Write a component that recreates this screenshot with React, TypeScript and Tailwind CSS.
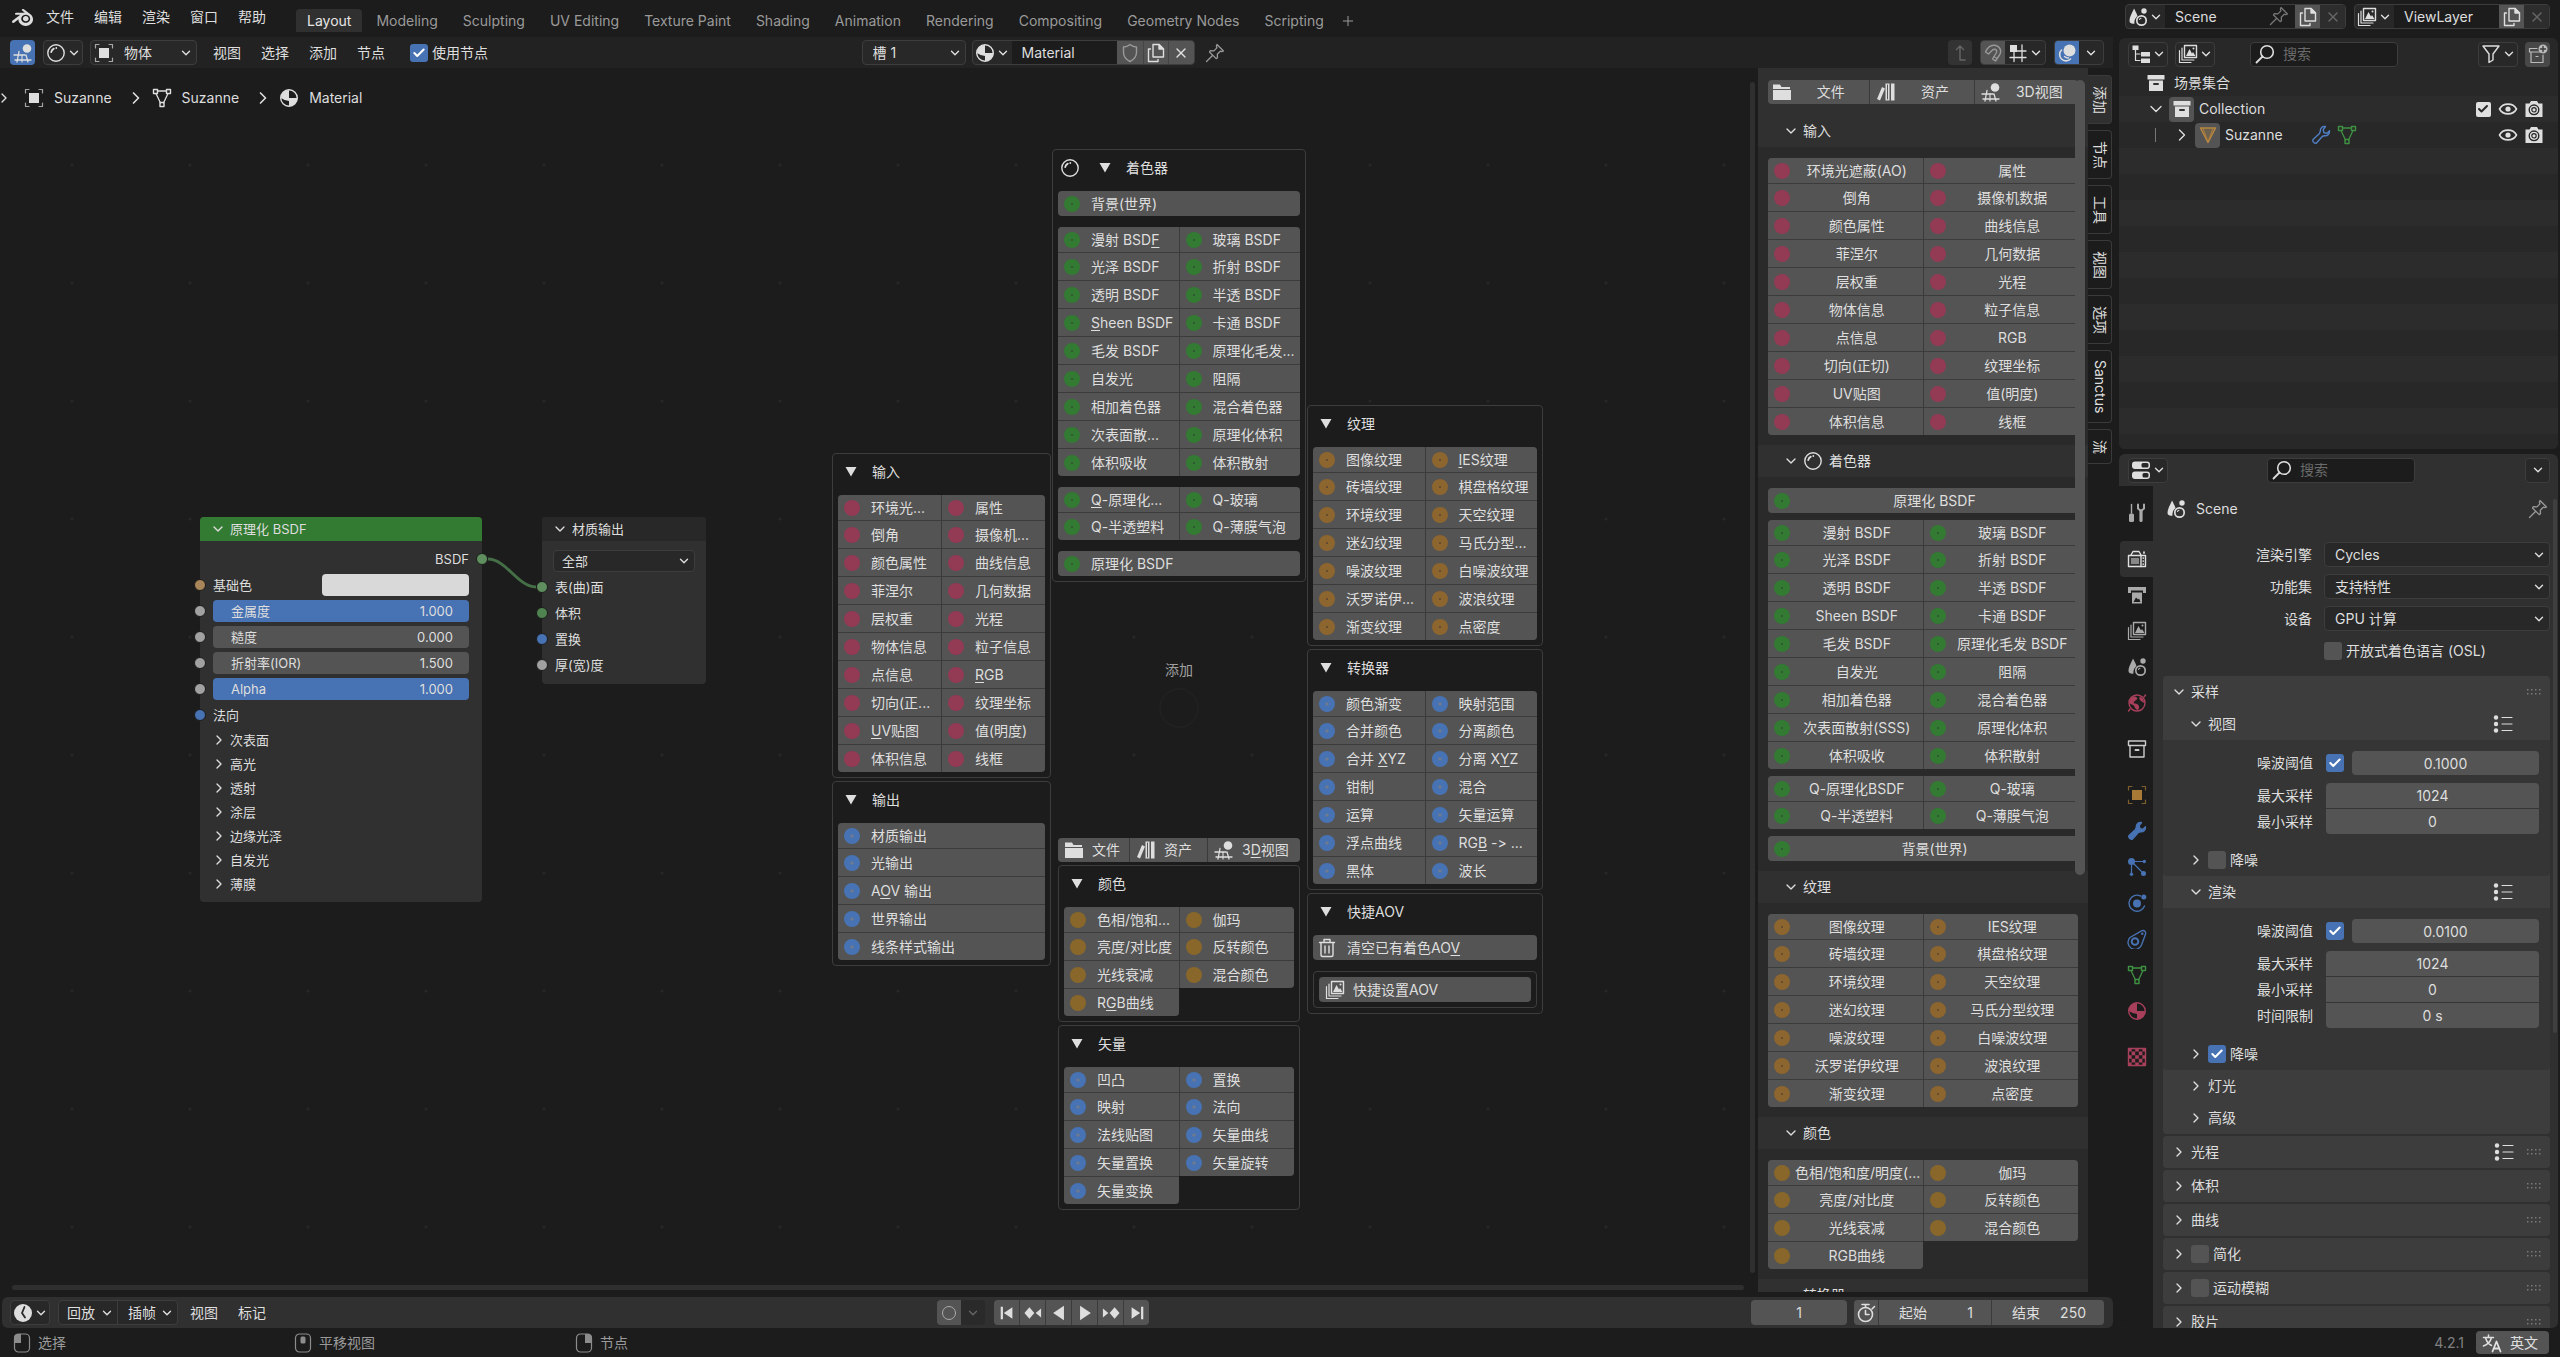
import React, { useId } from 'react';
import { SiBlender } from 'react-icons/si';
import { ChevronDown, ChevronRight, X, Plus, Check } from 'lucide-react';

/* ---------- icons ---------- */

type IconProps = { className?: string };

function Svg({ className = '', children }: IconProps & { children: React.ReactNode }) {
  return (
    <svg
      viewBox="0 0 20 20"
      className={`size-5 shrink-0 ${className}`}
      fill="none"
      stroke="currentColor"
      strokeWidth="1.4"
      strokeLinejoin="round"
      strokeLinecap="round"
      aria-hidden="true"
    >
      {children}
    </svg>
  );
}

const NodeGridIcon = (p: IconProps) => (
  <Svg {...p}>
    <path d="M1 12h11M2 17h16M6 8.5L4 19M13 12l2 7" strokeWidth="1.3" />
    <path d="M9 12V19" strokeWidth="1.1" />
    <circle cx="14" cy="5.5" r="4.3" fill="currentColor" stroke="none" />
  </Svg>
);

const SphereIcon = (p: IconProps) => (
  <Svg {...p}>
    <circle cx="10" cy="10" r="8.2" />
    <path d="M5.2 9.2a5 5 0 0 1 2.6-3.6" strokeWidth="1.8" />
    <path d="M10.3 5v.1" strokeWidth="1.8" />
  </Svg>
);

const ObjectIcon = (p: IconProps) => (
  <Svg {...p}>
    <rect x="5" y="5" width="10" height="10" fill="currentColor" stroke="none" />
    <path d="M1.5 5V1.5H5M15 1.5h3.5V5M18.500 15v3.500H15M5 18.500H1.500V15" opacity="0.7" strokeWidth="1.2" />
  </Svg>
);

const MeshIcon = (p: IconProps) => (
  <Svg {...p}>
    <path d="M5.500 3h9M4 5.500l4.500 9.500M16 5.500L11.500 15" strokeWidth="1.3" />
    <rect x="1.500" y="1.500" width="4" height="4" />
    <rect x="14.500" y="1.500" width="4" height="4" />
    <rect x="8" y="14.500" width="4" height="4" />
  </Svg>
);

const TriangleMeshIcon = (p: IconProps) => (
  <Svg {...p}>
    <path d="M2.500 3h15L10 17.500z" strokeWidth="1.6" fill="currentColor" fillOpacity="0.25" />
    <path d="M5 3l5 14L15 3" strokeWidth="0.8" />
  </Svg>
);

const MaterialIcon = (p: IconProps) => (
  <Svg {...p}>
    <circle cx="10" cy="10" r="8.300" />
    <path d="M10 10v8.300A8.300 8.300 0 0 0 18.300 10z" fill="currentColor" stroke="none" />
    <path d="M10 2a8 8 0 0 0-8 8q4 3 8 3z" fill="currentColor" stroke="none" />
  </Svg>
);

const ShieldIcon = (p: IconProps) => (
  <Svg {...p}>
    <path d="M10 1.500c2 1.800 4 2.500 6.500 2.500v5.500c0 4-2.500 7-6.500 9-4-2-6.500-5-6.500-9V4c2.500 0 4.500-.7 6.500-2.500z" />
  </Svg>
);

const CopyIcon = (p: IconProps) => (
  <Svg {...p}>
    <path d="M7 1.500h6l4.500 4.500v8H7z" />
    <path d="M13 1.500V6h4.500z" fill="currentColor" />
    <path d="M4.500 6H2.500v12.500H12V16.500" />
  </Svg>
);

const PinIcon = (p: IconProps) => (
  <Svg {...p}>
    <path d="M12 1.500L18.500 8l-1.600.6-1.600-.4-3 3 .2 3.600-1.300.8L4.500 9l.8-1.300 3.600.2 3-3-.5-1.700zM7.500 12.500L1.500 18.500" strokeWidth="1.300" />
  </Svg>
);

const UpIcon = (p: IconProps) => (
  <Svg {...p}>
    <path d="M6.500 6.500L10 3l3.500 3.500M10 3v14h5" />
  </Svg>
);

const MagnetIcon = (p: IconProps) => (
  <Svg {...p}>
    <path d="M2.500 9C5 3.500 9 1.500 13 2.500S19 8 16.500 12L12.500 18 9.500 16l4-6.500C14 8 13.500 7 12.500 6.500S10 6.500 9 7.500L5.500 11z" />
    <path d="M10.800 13.500l3.200 2" strokeWidth="1.100" />
  </Svg>
);

const SnapGridIcon = (p: IconProps) => (
  <Svg {...p}>
    <path d="M8 8H18M2 14.500h16M6 8v10.500M14 2v16.500" strokeWidth="1.300" />
    <rect x="2" y="2" width="7" height="7" fill="currentColor" stroke="none" />
  </Svg>
);

const OverlayIcon = (p: IconProps) => (
  <Svg {...p}>
    <circle cx="12.500" cy="7.500" r="6" fill="currentColor" stroke="none" />
    <path d="M4.500 7a6 6 0 1 0 9 9" strokeWidth="1.600" />
    <path d="M7.500 13.500q1.500 1.500 4 1.500" />
  </Svg>
);

const SceneIcon = (p: IconProps) => (
  <Svg {...p}>
    <path d="M6 1.500c-1 3-4.500 8-4.500 12.500 0 2.500 3 3 5 2.500C6 12 9 9.500 9.500 9 8.500 6 7 3.500 6 1.500z" fill="currentColor" stroke="none" />
    <circle cx="13.500" cy="13.500" r="4.700" strokeWidth="1.700" />
    <path d="M11.500 12.500q.5-1 1.500-1.300" strokeWidth="1.100" />
    <circle cx="16" cy="4" r="2.700" fill="currentColor" stroke="none" />
  </Svg>
);

const LayersIcon = (p: IconProps) => (
  <Svg {...p}>
    <rect x="6.500" y="1.500" width="12" height="12" />
    <path d="M8 12l3.500-7 2.500 4.500 1-1.500 2.500 4z" fill="currentColor" stroke="none" />
    <circle cx="15.500" cy="4.500" r="1" fill="currentColor" stroke="none" />
    <path d="M4 4v12h12M1.500 6.500v12H13" strokeWidth="1.200" />
  </Svg>
);

const OutlinerIcon = (p: IconProps) => (
  <Svg {...p}>
    <rect x="1.500" y="1.500" width="6" height="4.500" fill="currentColor" stroke="none" />
    <path d="M4.500 6v10.500H9M4.500 10H9" strokeWidth="1.200" />
    <rect x="10" y="8" width="9" height="4.500" fill="currentColor" stroke="none" />
    <rect x="10" y="14.500" width="9" height="4.500" fill="currentColor" stroke="none" />
  </Svg>
);

const SearchIcon = (p: IconProps) => (
  <Svg {...p}>
    <circle cx="12" cy="8" r="6.300" strokeWidth="1.600" />
    <path d="M7.500 12.500L1.500 18.500" strokeWidth="1.800" />
  </Svg>
);

const FilterIcon = (p: IconProps) => (
  <Svg {...p}>
    <path d="M2 2h16l-6 8v6l-4 2.500V10z" />
  </Svg>
);

const ArchiveIcon = (p: IconProps) => (
  <Svg {...p}>
    <path d="M1.500 2h17v4.500h-17zM3 7.500h14V18H3z" fill="currentColor" stroke="none" />
    <path d="M8 11h4" stroke="#303030" strokeWidth="2" />
  </Svg>
);

const ArchiveLineIcon = (p: IconProps) => (
  <Svg {...p}>
    <path d="M1.500 2h17v4.500h-17zM3 6.500h14V18H3z" />
    <path d="M8.500 11h3" strokeWidth="2" />
  </Svg>
);

const NewCollectionIcon = (p: IconProps) => (
  <Svg {...p}>
    <path d="M9 4.500H1.500V8H14M3 8v10.500h12V11M8 12.500h2" strokeWidth="1.200" />
    <circle cx="15" cy="5" r="4.500" fill="currentColor" stroke="none" />
    <path d="M15 2.500v5M12.500 5h5" stroke="#3c3c3c" />
  </Svg>
);

const WrenchIcon = ({ className, solid }: IconProps & { solid?: boolean }) => (
  <Svg className={className}>
    <path
      d="M14.500 1.500c-3-.5-5.500 1.500-5.200 4.800L8.500 8.500 2 14.500c-1 1.300.8 4.500 3.500 3.500l6-6.700 2.200-.6c3 .2 5.200-2 4.800-5l-2.500 2.500-3-.5-.8-3z"
      fill={solid ? 'currentColor' : 'none'}
    />
  </Svg>
);

const EyeIcon = (p: IconProps) => (
  <Svg {...p}>
    <path d="M1.500 10C5 3.500 15 3.500 18.500 10 15 16.500 5 16.500 1.500 10z" strokeWidth="1.600" />
    <circle cx="10" cy="10" r="2.600" fill="currentColor" stroke="none" />
  </Svg>
);

const CameraIcon = (p: IconProps) => (
  <Svg {...p}>
    <path d="M1.500 4.500h4L7 2h6l1.500 2.500h4V18h-17z" fill="currentColor" stroke="none" />
    <circle cx="10" cy="10.800" r="4.800" stroke="#282828" strokeWidth="1.400" />
    <circle cx="10" cy="10.800" r="2.200" stroke="#282828" strokeWidth="1.200" />
  </Svg>
);

const PropsIcon = (p: IconProps) => (
  <Svg {...p}>
    <rect x="1" y="1.500" width="18" height="7.500" rx="3" fill="currentColor" stroke="none" />
    <rect x="10.500" y="3" width="7" height="4.500" rx="1.500" fill="#282828" stroke="none" />
    <rect x="1" y="11.500" width="18" height="7.500" rx="3" fill="currentColor" stroke="none" />
    <rect x="11.500" y="13" width="6" height="4.500" rx="1.500" fill="#282828" stroke="none" />
  </Svg>
);

const ToolIcon = (p: IconProps) => (
  <Svg {...p}>
    <path d="M4.500 1.500V10" />
    <rect x="2" y="10.500" width="5" height="8.500" rx="1.500" fill="currentColor" stroke="none" />
    <path d="M11 1.500v4l3 2.500 3-2.500v-4" strokeWidth="2" />
    <path d="M14 8v9.500" strokeWidth="3.200" />
  </Svg>
);

const RenderIcon = (p: IconProps) => (
  <Svg {...p}>
    <path d="M4 6l2-3.500h6L14 6M1.500 6.500h17v11h-17z" />
    <path d="M14 7v10.500" />
    <rect x="4" y="9" width="8" height="6" fill="currentColor" stroke="none" opacity="0.5" />
    <path d="M16.200 9v.1M16.200 12v.1M16.200 15v.1M17 3v1" strokeWidth="1.700" />
  </Svg>
);

const OutputIcon = (p: IconProps) => (
  <Svg {...p}>
    <path d="M1 2h18v6h-3V5.500H4V8H1z" fill="currentColor" stroke="none" />
    <rect x="5" y="7.500" width="10" height="11" fill="currentColor" stroke="none" />
    <path d="M6.500 17L9 12.500l2 2 1-1 1.500 3.500z" fill="#1c1c1c" stroke="none" />
  </Svg>
);

const WorldIcon = (p: IconProps) => (
  <Svg {...p}>
    <circle cx="10" cy="10" r="8" />
    <path d="M4 5c3-2 5-2 6 0s-2 2-3 4 1 1 3 2 3 3 1 6c-3 0-3-4-5-5s-3-1-4-3zM13 4c2 0 4 3 4 5s-3-1-4-2-1-3 0-3z" fill="currentColor" stroke="none" />
    <path d="M17 4l1.500-2M3 16l-1.500 2" />
  </Svg>
);

const ParticlesIcon = (p: IconProps) => (
  <Svg {...p}>
    <circle cx="4.500" cy="4.500" r="3.500" fill="currentColor" stroke="none" />
    <path d="M8 4.500h8M4.500 8v8M7 7l9.500 9.500" strokeWidth="1.200" />
    <circle cx="17.300" cy="4.500" r="1.700" fill="currentColor" stroke="none" />
    <circle cx="4.500" cy="17.300" r="1.700" fill="currentColor" stroke="none" />
    <circle cx="16.500" cy="16.500" r="2.500" fill="currentColor" stroke="none" />
  </Svg>
);

const PhysicsIcon = (p: IconProps) => (
  <Svg {...p}>
    <path d="M13.500 3A8 8 0 1 0 17.500 13" />
    <circle cx="10" cy="10.500" r="4" fill="currentColor" stroke="none" />
    <circle cx="16.800" cy="4" r="2.500" fill="currentColor" stroke="none" />
  </Svg>
);

const ConstraintIcon = (p: IconProps) => (
  <Svg {...p}>
    <path d="M3 8.500L14.500 1.800c3-1 4.800 1 3.900 3.800L14.500 16a7 7 0 1 1-11.500-7.500z" />
    <circle cx="8" cy="12.500" r="3.300" strokeWidth="2" />
    <circle cx="15.300" cy="4.800" r="1.200" fill="currentColor" stroke="none" />
  </Svg>
);

const TextureIcon = (p: IconProps) => (
  <Svg {...p}>
    <rect x="1.500" y="1.500" width="17" height="17" />
    <path
      d="M1 1h3.600v3.600H1zM8.200 1h3.600v3.600H8.200zM15.400 1H19v3.600h-3.600zM4.600 4.600h3.600v3.600H4.600zM11.800 4.600h3.600v3.600h-3.600zM1 8.200h3.600v3.600H1zM8.200 8.200h3.600v3.600H8.200zM15.400 8.200H19v3.600h-3.600zM4.600 11.800h3.600v3.600H4.600zM11.800 11.800h3.600v3.600h-3.600zM1 15.400h3.600V19H1zM8.200 15.400h3.600V19H8.200zM15.400 15.400H19V19h-3.600z"
      fill="currentColor"
      stroke="none"
    />
  </Svg>
);

const ListIcon = (p: IconProps) => (
  <Svg {...p}>
    <path d="M9 3.500h10M9 10h10M9 16.500h10" strokeWidth="1.200" />
    <circle cx="3" cy="3.500" r="2.200" fill="currentColor" stroke="none" />
    <circle cx="3" cy="10" r="2.200" fill="currentColor" stroke="none" />
    <circle cx="3" cy="16.500" r="2.200" fill="currentColor" stroke="none" />
  </Svg>
);

const GripIcon = () => (
  <svg viewBox="0 0 16 6" className="h-1.5 w-4 shrink-0 text-[#7a7a7a]" fill="currentColor" aria-hidden="true">
    {[0, 4, 8, 12].map((x) => (
      <React.Fragment key={x}>
        <rect x={x + 1} y="0" width="1.500" height="1.500" />
        <rect x={x + 1} y="4" width="1.500" height="1.500" />
      </React.Fragment>
    ))}
  </svg>
);

const ClockIcon = (p: IconProps) => (
  <Svg {...p}>
    <circle cx="10" cy="10" r="9" fill="currentColor" stroke="none" />
    <path d="M11.500 4L9 10l3 4.500" stroke="#282828" strokeWidth="1.800" />
  </Svg>
);

const StopwatchIcon = (p: IconProps) => (
  <Svg {...p}>
    <circle cx="9.500" cy="11.500" r="7" strokeWidth="1.600" />
    <path d="M6 1.500h7M9.500 1.500v3M9.500 7.500v4h3.500M16 6l2.500-2.500" strokeWidth="1.600" />
  </Svg>
);

const FolderIcon = (p: IconProps) => (
  <Svg {...p}>
    <path d="M1 2.500h7l1.500 2.500H18v2H1zM1 8h18v10H1z" fill="currentColor" stroke="none" />
  </Svg>
);

const BooksIcon = (p: IconProps) => (
  <Svg {...p}>
    <path d="M6 5l3 1.500-5 12-3-1.500zM9.500 1.500h4v17h-4zM15 1.500h3.500v17H15z" fill="currentColor" stroke="none" />
    <path d="M11.500 3v14" stroke="#545454" strokeWidth="1" />
  </Svg>
);

const TrashIcon = (p: IconProps) => (
  <Svg {...p}>
    <path d="M2.500 4.500h15M7 4.500v-3h6v3M4 4.500V17c0 1 .5 1.500 1.500 1.500h9c1 0 1.500-.5 1.500-1.500V4.500M8 8v7M12 8v7" />
  </Svg>
);

const TranslateIcon = (p: IconProps) => (
  <Svg {...p}>
    <path d="M1.500 4.500h10M6.500 2v2.500M3.500 4.500c1 4 3 6.500 6 8M9.500 4.500c-1 4-3.500 7-8 8.500" strokeWidth="1.500" />
    <path d="M10.500 18.500l4-10 4 10M12 15.500h5" strokeWidth="1.800" />
  </Svg>
);

function MouseIcon({ press }: { press: 'left' | 'middle' | 'right' }) {
  return (
    <Svg className="text-[#8c8c8c]">
      <rect x="2.500" y="1" width="15" height="18" rx="4" strokeWidth="1.200" />
      {press === 'left' && <path d="M2 10V5q0-4 4-4h3v9z" fill="currentColor" stroke="none" />}
      {press === 'middle' && <rect x="7.500" y="3.500" width="5" height="7" rx="1.500" fill="currentColor" stroke="none" />}
      {press === 'right' && <path d="M18 10V5q0-4-4-4h-3v9z" fill="currentColor" stroke="none" />}
    </Svg>
  );
}

const TRANSPORT = [
  { label: '跳转到起点', d: 'M3 3h2.500v14H3zM16 3.500v13L6.500 10z' },
  { label: '上一关键帧', d: 'M6 3.500l5.500 6.500L6 16.500.5 10zM19 5v10l-6-5z' },
  { label: '反向播放', d: 'M15.500 2v16L3.500 10z' },
  { label: '播放', d: 'M4.500 2v16l12-8z' },
  { label: '下一关键帧', d: 'M14 3.500l5.500 6.500-5.500 6.500L8.500 10zM1 5v10l6-5z' },
  { label: '跳转到终点', d: 'M17 3h-2.500v14H17zM4 3.500v13L13.500 10z' },
];

/* ---------- shared controls ---------- */

function Caret({ className = '' }: IconProps) {
  return <ChevronDown className={`size-3.5 shrink-0 ${className}`} strokeWidth={2.4} aria-hidden="true" />;
}

/** Icon with a small arrow that opens a menu */
function MenuButton({ label, className = '', children }: { label: string; className?: string; children?: React.ReactNode }) {
  return (
    <button
      aria-label={label}
      aria-haspopup="menu"
      className={`flex h-[25px] w-10 shrink-0 items-center justify-center gap-px rounded border border-[#3d3d3d] bg-[#282828] ${className}`}
    >
      {children}
      <Caret />
    </button>
  );
}

function Select({ label, value, className = '', pad = 'pl-2.5' }: { label: string; value: string; className?: string; pad?: string }) {
  return (
    <div className={`relative flex items-center ${className}`}>
      <select aria-label={label} className={`size-full appearance-none rounded border border-[#3d3d3d] bg-[#282828] ${pad} outline-none`}>
        <option>{value}</option>
      </select>
      <Caret className="pointer-events-none absolute right-1" />
    </div>
  );
}

function Checkbox({ id, checked, label }: { id?: string; checked?: boolean; label?: string }) {
  return (
    <span className="relative flex size-[18px] shrink-0 items-center justify-center">
      <input
        id={id}
        aria-label={label}
        type="checkbox"
        defaultChecked={checked}
        className="peer size-[18px] appearance-none rounded-[3px] bg-[#545454] checked:bg-[#4772b3]"
      />
      <Check className="pointer-events-none absolute hidden size-3.5 text-white peer-checked:block" strokeWidth={3.5} aria-hidden="true" />
    </span>
  );
}

function SearchBox({ className }: { className: string }) {
  return (
    <label className={`flex h-[25px] items-center gap-2 rounded border border-[#3d3d3d] bg-[#1c1c1c] px-1 ${className}`}>
      <SearchIcon />
      <input type="search" placeholder="搜索" aria-label="搜索" className="min-w-0 flex-1 bg-transparent outline-none placeholder:text-[#6a6a6a]" />
    </label>
  );
}

/** Data block picker: icon menu, name, then action buttons */
function DataBlock({ icon, label, value, inputClass, children }: { icon: React.ReactNode; label: string; value: string; inputClass: string; children: React.ReactNode }) {
  return (
    <div className="flex h-[25px] shrink-0 overflow-hidden rounded border border-[#3d3d3d] bg-[#282828]">
      <button aria-label={`浏览${label}`} className="flex w-[39px] items-center justify-center gap-px">
        {icon}
        <Caret />
      </button>
      <input aria-label={label} defaultValue={value} className={`bg-[#1c1c1c] pl-2.5 outline-none ${inputClass}`} />
      {children}
    </div>
  );
}

/* ---------- node add buttons ---------- */

const SOCKETS = {
  pink: 'text-[#933a55]',
  green: 'text-[#337a33]',
  orange: 'text-[#8d652e]',
  yellow: 'text-[#89672a]',
  blue: 'text-[#4772b3]',
};

type SocketColor = keyof typeof SOCKETS;

function SocketIcon({ color }: { color: SocketColor }) {
  return (
    <svg viewBox="0 0 18 18" className={`size-[18px] shrink-0 ${SOCKETS[color]}`} aria-hidden="true">
      <circle cx="9" cy="9" r="8" fill="currentColor" />
      {color === 'blue' && <circle cx="9" cy="9" r="1.800" fill="#6d7b92" />}
      {(color === 'green' || color === 'orange') && <circle cx="9" cy="9" r="0.800" fill="#333" />}
    </svg>
  );
}

/** An underscore marks the shortcut letter that follows it */
function Mnemonic({ text }: { text: string }) {
  const at = text.indexOf('_');
  if (at < 0) return <>{text}</>;
  return (
    <>
      {text.slice(0, at)}
      <span className="underline underline-offset-2">{text[at + 1]}</span>
      {text.slice(at + 2)}
    </>
  );
}

function NodeGroup({ columns, color, centered }: { columns: string[][]; color: SocketColor; centered?: boolean }) {
  return (
    <div className="flex items-start">
      {columns.map((items, c) => {
        const first = c === 0;
        const last = c === columns.length - 1;
        const longer = first && !last && items.length > columns[1].length;
        return (
          <div
            key={c}
            className={`flex min-w-0 flex-1 flex-col gap-px overflow-hidden bg-[#3b3b3b] ${first ? 'rounded-l' : 'border-l border-[#3b3b3b]'} ${last ? 'rounded-r' : ''} ${longer ? 'rounded-br' : ''}`}
          >
            {items.map((text, i) => (
              <button
                key={text}
                className={`flex items-center bg-[#545454] pl-[5px] ${i === 0 ? 'h-[25px]' : 'h-[27px]'}`}
              >
                <SocketIcon color={color} />
                <span className={`flex-1 whitespace-nowrap ${centered ? 'pr-1 pl-1 text-center' : 'pl-2.5 text-left'}`}>
                  <Mnemonic text={text} />
                </span>
              </button>
            ))}
          </div>
        );
      })}
    </div>
  );
}

/* ---------- pie menu ---------- */

function PiePanel({ title, icon, children }: { title: string; icon?: React.ReactNode; children: React.ReactNode }) {
  return (
    <section className="flex flex-col gap-[11px] rounded border border-[#3d3d3d] bg-[#1c1c1c] p-[5px]">
      <button className="flex h-[25px] items-center text-left">
        {icon && <span className="flex w-[34px] pl-0.5">{icon}</span>}
        <span className="w-[34px] pl-[7px]">
          <svg viewBox="0 0 12 10" className="h-2.5 w-3" fill="currentColor" aria-hidden="true">
            <path d="M.5 0h11L6 9.500z" />
          </svg>
        </span>
        {title}
      </button>
      {children}
    </section>
  );
}

function PieMenu() {
  return (
    <div>
      <div className="absolute top-[385px] left-[832px] flex w-[219px] flex-col gap-[3px]">
        <PiePanel title="输入">
          <NodeGroup
            color="pink"
            columns={[
              ['环境光...', '倒角', '颜色属性', '菲涅尔', '层权重', '物体信息', '点信息', '切向(正...', '_UV贴图', '体积信息'],
              ['属性', '摄像机...', '曲线信息', '几何数据', '光程', '粒子信息', '_RGB', '纹理坐标', '值(明度)', '线框'],
            ]}
          />
        </PiePanel>
        <PiePanel title="输出">
          <NodeGroup color="blue" columns={[['材质输出', '光输出', 'A_OV 输出', '世界输出', '线条样式输出']]} />
        </PiePanel>
      </div>

      <div className="absolute top-[81px] left-[1052px] w-[254px]">
        <PiePanel title="着色器" icon={<SphereIcon />}>
          <NodeGroup color="green" columns={[['背景(世界)']]} />
          <NodeGroup
            color="green"
            columns={[
              ['漫射 BSD_F', '光泽 BSDF', '透明 BSDF', '_Sheen BSDF', '毛发 BSDF', '自发光', '相加着色器', '次表面散...', '体积吸收'],
              ['玻璃 BSDF', '折射 BSDF', '半透 BSDF', '卡通 BSDF', '原理化毛发...', '阻隔', '混合着色器', '原理化体积', '体积散射'],
            ]}
          />
          <NodeGroup color="green" columns={[['_Q-原理化...', 'Q-半透塑料'], ['Q-玻璃', 'Q-薄膜气泡']]} />
          <NodeGroup color="green" columns={[['原理化 BSDF']]} />
        </PiePanel>
      </div>

      {/* pie centre */}
      <div className="absolute top-[592px] left-[1052px] flex w-[254px] flex-col items-center gap-2 text-[#a0a0a0]">
        <span>添加</span>
        <span className="size-10 rounded-full border-2 border-[#202020]" />
      </div>

      <div className="absolute top-[770px] left-[1058px] flex w-[242px] flex-col gap-[3px]">
        <div className="flex h-6 gap-px overflow-hidden rounded bg-[#3b3b3b]">
          <button className="flex w-[71px] items-center gap-2 bg-[#545454] pl-1.5">
            <FolderIcon />文件
          </button>
          <button className="flex w-[77px] items-center gap-2 bg-[#545454] pl-1.5">
            <BooksIcon />资产
          </button>
          <button className="flex flex-1 items-center gap-2 bg-[#545454] pl-1.5">
            <NodeGridIcon />
            <span><Mnemonic text="3_D视图" /></span>
          </button>
        </div>
        <PiePanel title="颜色">
          <NodeGroup color="yellow" columns={[['色相/饱和...', '亮度/对比度', '光线衰减', 'R_GB曲线'], ['伽玛', '反转颜色', '混合颜色']]} />
        </PiePanel>
        <PiePanel title="矢量">
          <NodeGroup color="blue" columns={[['凹凸', '映射', '法线贴图', '矢量置换', '矢量变换'], ['置换', '法向', '矢量曲线', '矢量旋转']]} />
        </PiePanel>
      </div>

      <div className="absolute top-[337px] left-[1307px] flex w-[236px] flex-col gap-[3px]">
        <PiePanel title="纹理">
          <NodeGroup
            color="orange"
            columns={[
              ['图像纹理', '砖墙纹理', '环境纹理', '迷幻纹理', '噪波纹理', '沃罗诺伊...', '渐变纹理'],
              ['_IES纹理', '棋盘格纹理', '天空纹理', '马氏分型...', '白噪波纹理', '波浪纹理', '点密度'],
            ]}
          />
        </PiePanel>
        <PiePanel title="转换器">
          <NodeGroup
            color="blue"
            columns={[
              ['颜色渐变', '合并颜色', '合并 _XYZ', '钳制', '运算', '浮点曲线', '黑体'],
              ['映射范围', '分离颜色', '分离 X_YZ', '混合', '矢量运算', 'RG_B -> ...', '波长'],
            ]}
          />
        </PiePanel>
        <PiePanel title="快捷AOV">
          <button className="flex h-[25px] items-center gap-2.5 rounded bg-[#545454] pl-1">
            <TrashIcon />
            <span><Mnemonic text="清空已有着色AO_V" /></span>
          </button>
          <div className="rounded border border-[#3d3d3d] p-[5px]">
            <button className="flex h-[25px] w-full items-center gap-2 rounded bg-[#545454] pl-1.5">
              <LayersIcon />快捷设置AOV
            </button>
          </div>
        </PiePanel>
      </div>
    </div>
  );
}

/* ---------- shader nodes ---------- */

function Socket({ className }: { className: string }) {
  return <span className={`absolute size-3 rounded-full border border-[#1c1c1c] ${className}`} />;
}

function SliderRow({ label, value, full }: { label: string; value: string; full?: boolean }) {
  const id = useId();
  return (
    <div className="relative flex h-[22px] items-center">
      <Socket className="-left-[19px] bg-[#a1a1a1]" />
      <div className={`flex h-full w-full items-center rounded pr-4 pl-[18px] ${full ? 'bg-[#4772b3]' : 'bg-[#545454]'}`}>
        <label htmlFor={id} className="flex-1">{label}</label>
        <input id={id} defaultValue={value} className="w-16 bg-transparent text-right outline-none" />
      </div>
    </div>
  );
}

function ShaderNodes() {
  return (
    <div className="text-[13px]">
      <section className="absolute top-[449px] left-[200px] h-[385px] w-[282px] rounded bg-[#303030]">
        <button className="flex h-6 w-full items-center gap-1 rounded-t bg-[#337a33] pl-2.5">
          <ChevronDown className="size-4" aria-hidden="true" />原理化 BSDF
        </button>
        <div className="flex flex-col gap-1 px-[13px] pt-[7px]">
          <div className="relative flex h-[22px] items-center justify-end">
            BSDF
            <Socket className="-right-[19px] bg-[#5f8f5f]" />
          </div>
          <div className="relative flex h-[22px] items-center justify-between">
            <Socket className="-left-[19px] bg-[#a8865a]" />
            <label htmlFor="base-color">基础色</label>
            <button id="base-color" aria-label="基础色" className="h-[22px] w-[147px] rounded bg-[#d9d9d9]" />
          </div>
          <SliderRow label="金属度" value="1.000" full />
          <SliderRow label="糙度" value="0.000" />
          <SliderRow label="折射率(IOR)" value="1.500" />
          <SliderRow label="Alpha" value="1.000" full />
          <div className="relative flex h-[22px] items-center">
            <Socket className="-left-[19px] bg-[#4772b3]" />
            法向
          </div>
        </div>
        <div className="flex flex-col pt-0.5 pl-[11px]">
          {['次表面', '高光', '透射', '涂层', '边缘光泽', '自发光', '薄膜'].map((name) => (
            <button key={name} className="flex h-6 items-center gap-[3px] text-left">
              <ChevronRight className="size-4" aria-hidden="true" />{name}
            </button>
          ))}
        </div>
      </section>

      <section className="absolute top-[449px] left-[542px] h-[167px] w-[164px] rounded bg-[#303030]">
        <button className="flex h-6 w-full items-center gap-1 rounded-t bg-[#282828] pl-2.5">
          <ChevronDown className="size-4" aria-hidden="true" />材质输出
        </button>
        <div className="flex flex-col gap-1 px-[11px] pt-[9px]">
          <Select label="目标" value="全部" className="h-[22px]" pad="pl-2" />
          {[
            ['表(曲)面', 'bg-[#5f8f5f]'],
            ['体积', 'bg-[#4f8350]'],
            ['置换', 'bg-[#4772b3]'],
            ['厚(宽)度', 'bg-[#a1a1a1]'],
          ].map(([name, color]) => (
            <div key={name} className="relative flex h-[22px] items-center pl-0.5">
              <Socket className={`-left-[17px] ${color}`} />
              {name}
            </div>
          ))}
        </div>
      </section>

      <svg className="pointer-events-none absolute top-[481px] left-[482px] h-12 w-16" viewBox="0 0 64 48" fill="none" aria-hidden="true">
        <path d="M6 10C24 10 36 38 54 38" stroke="#456f46" strokeWidth="3" />
      </svg>
    </div>
  );
}

function Canvas() {
  return (
    <div className="relative min-w-0 flex-1 overflow-hidden bg-[#1c1c1c] bg-[radial-gradient(circle_at_72px_97px,#272727_1px,transparent_2px)] bg-[size:118px_118px]">
      <nav aria-label="路径" className="flex h-15 items-center">
        <ChevronRight className="-ml-1 size-4" aria-hidden="true" />
        <a href="#object" className="flex items-center gap-2.5 pl-3"><ObjectIcon />Suzanne</a>
        <ChevronRight className="mr-1.5 ml-3.5 size-5" aria-hidden="true" />
        <a href="#mesh" className="flex items-center gap-2.5"><MeshIcon />Suzanne</a>
        <ChevronRight className="mr-1.5 ml-3.5 size-5" aria-hidden="true" />
        <a href="#material" className="flex items-center gap-2.5"><MaterialIcon />Material</a>
      </nav>
      <ShaderNodes />
      <PieMenu />
      {/* scroll bars */}
      <div className="absolute top-3.5 right-[3px] bottom-[19px] w-[5px] rounded-full bg-[#2f2f2f]" />
      <div className="absolute right-3.5 bottom-0.5 left-3 h-[5px] rounded-full bg-[#2f2f2f]" />
    </div>
  );
}

/* ---------- sidebar ---------- */

function SidePanel({ title, icon, children }: { title: string; icon?: React.ReactNode; children?: React.ReactNode }) {
  return (
    <section className="shrink-0">
      <button className="flex h-8 w-full items-center bg-[#303030] pl-[25px]">
        <ChevronDown className="mr-1 size-4 shrink-0" aria-hidden="true" />
        {icon && <span className="mr-1.5 flex">{icon}</span>}
        {title}
      </button>
      <div className="flex flex-col gap-[7px] pt-[11px] pr-2.5 pb-2.5 pl-2.5">{children}</div>
    </section>
  );
}

function Sidebar() {
  return (
    <aside className="relative flex w-[330px] shrink-0 flex-col overflow-hidden bg-[#2a2a2a]">
      <div className="flex h-[47px] shrink-0 items-start bg-[#303030] px-2.5 pt-3">
        <div className="flex h-6 flex-1 gap-px overflow-hidden rounded bg-[#3b3b3b]">
          <button className="flex flex-1 items-center bg-[#545454] pl-1"><FolderIcon /><span className="flex-1">文件</span></button>
          <button className="flex flex-1 items-center bg-[#545454] pl-1.5"><BooksIcon /><span className="flex-1">资产</span></button>
          <button className="flex flex-1 items-center bg-[#545454] pl-1.5"><NodeGridIcon /><span className="flex-1">3D视图</span></button>
        </div>
      </div>
      <SidePanel title="输入">
        <NodeGroup
          centered
          color="pink"
          columns={[
            ['环境光遮蔽(AO)', '倒角', '颜色属性', '菲涅尔', '层权重', '物体信息', '点信息', '切向(正切)', 'UV贴图', '体积信息'],
            ['属性', '摄像机数据', '曲线信息', '几何数据', '光程', '粒子信息', 'RGB', '纹理坐标', '值(明度)', '线框'],
          ]}
        />
      </SidePanel>
      <SidePanel title="着色器" icon={<SphereIcon />}>
        <NodeGroup centered color="green" columns={[['原理化 BSDF']]} />
        <NodeGroup
          centered
          color="green"
          columns={[
            ['漫射 BSDF', '光泽 BSDF', '透明 BSDF', 'Sheen BSDF', '毛发 BSDF', '自发光', '相加着色器', '次表面散射(SSS)', '体积吸收'],
            ['玻璃 BSDF', '折射 BSDF', '半透 BSDF', '卡通 BSDF', '原理化毛发 BSDF', '阻隔', '混合着色器', '原理化体积', '体积散射'],
          ]}
        />
        <NodeGroup centered color="green" columns={[['Q-原理化BSDF', 'Q-半透塑料'], ['Q-玻璃', 'Q-薄膜气泡']]} />
        <NodeGroup centered color="green" columns={[['背景(世界)']]} />
      </SidePanel>
      <SidePanel title="纹理">
        <NodeGroup
          centered
          color="orange"
          columns={[
            ['图像纹理', '砖墙纹理', '环境纹理', '迷幻纹理', '噪波纹理', '沃罗诺伊纹理', '渐变纹理'],
            ['IES纹理', '棋盘格纹理', '天空纹理', '马氏分型纹理', '白噪波纹理', '波浪纹理', '点密度'],
          ]}
        />
      </SidePanel>
      <SidePanel title="颜色">
        <NodeGroup
          centered
          color="yellow"
          columns={[['色相/饱和度/明度(...', '亮度/对比度', '光线衰减', 'RGB曲线'], ['伽玛', '反转颜色', '混合颜色']]}
        />
      </SidePanel>
      <SidePanel title="转换器" />
      {/* scroll bar */}
      <div className="absolute top-3 right-[3px] h-[795px] w-2.5 rounded-full bg-[#545454]" />
    </aside>
  );
}

const SIDE_TABS = [
  { name: '添加', height: 'h-[49px]' },
  { name: '节点', height: 'h-[49px]' },
  { name: '工具', height: 'h-[49px]' },
  { name: '视图', height: 'h-[49px]' },
  { name: '选项', height: 'h-[49px]' },
  { name: 'Sanctus', height: 'h-[73px]' },
  { name: '流', height: 'h-[35px]' },
];

function SideTabs() {
  return (
    <div role="tablist" aria-label="侧栏" className="flex w-[25px] shrink-0 flex-col gap-1.5 pt-[7px] pr-px">
      {SIDE_TABS.map((tab, i) => (
        <button
          key={tab.name}
          role="tab"
          aria-selected={i === 0}
          className={`flex shrink-0 items-center justify-center rounded-r border border-l-0 border-[#3a3a3a] ${tab.height} ${i === 0 ? 'bg-[#303030]' : 'bg-[#1c1c1c]'}`}
        >
          <span className="[text-orientation:sideways] [writing-mode:vertical-rl]">{tab.name}</span>
        </button>
      ))}
    </div>
  );
}

/* ---------- headers ---------- */

function TopBar() {
  return (
    <header className="flex h-[37px] shrink-0 items-start">
      <nav aria-label="主菜单" className="flex h-[34px] items-center">
        <button aria-label="Blender" className="pl-3"><SiBlender className="size-[21px]" /></button>
        <div className="flex pl-[3px]">
          {['文件', '编辑', '渲染', '窗口', '帮助'].map((name) => (
            <button key={name} className="px-2.5">{name}</button>
          ))}
        </div>
      </nav>
      <div role="tablist" aria-label="工作区" className="flex gap-[3px] pt-[9px] pl-5 text-[#9a9a9a]">
        {['Layout', 'Modeling', 'Sculpting', 'UV Editing', 'Texture Paint', 'Shading', 'Animation', 'Rendering', 'Compositing', 'Geometry Nodes', 'Scripting'].map((name, i) => (
          <button
            key={name}
            role="tab"
            aria-selected={i === 0}
            className={`h-[23px] rounded-t px-[11px] ${i === 0 ? 'bg-[#303030] text-[#e5e5e5]' : ''}`}
          >
            {name}
          </button>
        ))}
        <button aria-label="添加工作区" className="flex h-[23px] items-center pl-0.5"><Plus className="size-4" strokeWidth={1.5} /></button>
      </div>
      <div className="ml-auto flex gap-2 pt-1 pr-2.5">
        <div className="relative">
          <DataBlock label="场景" value="Scene" icon={<SceneIcon />} inputClass="w-[130px]">
            <button aria-label="新建场景" className="flex w-[25px] items-center justify-center bg-[#545454]"><CopyIcon /></button>
            <button aria-label="删除场景" className="flex w-[25px] items-center justify-center bg-[#2d2d2d] text-[#666]"><X className="size-4" /></button>
          </DataBlock>
          <button aria-label="固定场景" className="absolute top-0.5 left-[144px] text-[#777]"><PinIcon /></button>
        </div>
        <DataBlock label="视图层" value="ViewLayer" icon={<LayersIcon />} inputClass="w-[105px]">
          <button aria-label="新建视图层" className="flex w-[25px] items-center justify-center bg-[#545454]"><CopyIcon /></button>
          <button aria-label="删除视图层" className="flex w-[25px] items-center justify-center bg-[#2d2d2d] text-[#666]"><X className="size-4" /></button>
        </DataBlock>
      </div>
    </header>
  );
}

function EditorHeader() {
  return (
    <div className="flex h-[31px] shrink-0 items-center bg-[#222] pr-[9px] pl-2.5">
      <div className="flex flex-1 items-center">
        <button aria-label="着色器编辑器" className="flex h-[25px] w-[25px] items-center justify-center rounded bg-[#4772b3]"><NodeGridIcon /></button>
        <MenuButton label="着色类型" className="ml-2"><SphereIcon /></MenuButton>
        <div className="relative ml-[7px] h-[25px] w-[107px]">
          <Select label="着色器类型" value="物体" className="h-[25px]" pad="pl-[33px]" />
          <ObjectIcon className="pointer-events-none absolute top-[3px] left-1" />
        </div>
        <div className="flex pl-1.5">
          {['视图', '选择', '添加', '节点'].map((name) => (
            <button key={name} className="px-2.5">{name}</button>
          ))}
        </div>
        <label className="ml-[15px] flex items-center gap-1">
          <Checkbox checked />使用节点
        </label>
      </div>
      <div className="mr-7 flex items-center">
        <Select label="材质槽" value="槽 1" className="mr-1.5 h-[25px] w-[104px]" />
        <DataBlock label="材质" value="Material" icon={<MaterialIcon />} inputClass="w-[105px]">
          <button aria-label="伪用户" className="flex w-[26px] items-center justify-center bg-[#545454] text-[#999]"><ShieldIcon /></button>
          <button aria-label="新建材质" className="flex w-[26px] items-center justify-center border-x border-[#444] bg-[#545454]"><CopyIcon /></button>
          <button aria-label="断开材质" className="flex w-[25px] items-center justify-center bg-[#545454]"><X className="size-4" /></button>
        </DataBlock>
        <button aria-label="固定" className="ml-2.5 text-[#999]"><PinIcon /></button>
      </div>
      <div className="flex flex-1 items-center justify-end gap-2">
        <button aria-label="父级节点树" className="flex h-[25px] w-6 items-center justify-center rounded bg-[#333] text-[#666]"><UpIcon /></button>
        <div className="flex h-[25px] overflow-hidden rounded border border-[#3d3d3d] bg-[#282828]">
          <button aria-label="吸附" className="flex w-6 items-center justify-center bg-[#545454] text-[#999]"><MagnetIcon /></button>
          <button aria-label="吸附到" className="flex w-10 items-center justify-center gap-px"><SnapGridIcon /><Caret /></button>
        </div>
        <div className="flex h-[25px] overflow-hidden rounded border border-[#3d3d3d] bg-[#282828]">
          <button aria-label="叠加层" className="flex w-6 items-center justify-center bg-[#4772b3]"><OverlayIcon /></button>
          <button aria-label="叠加层选项" className="flex w-6 items-center justify-center"><Caret /></button>
        </div>
      </div>
    </div>
  );
}

/* ---------- outliner ---------- */

function Outliner() {
  return (
    <section className="flex h-[411px] shrink-0 flex-col overflow-hidden rounded-md bg-[#282828]">
      <div className="flex h-8 shrink-0 items-center pr-2 pl-[9px]">
        <MenuButton label="编辑器类型"><OutlinerIcon /></MenuButton>
        <MenuButton label="显示模式" className="ml-[7px]"><LayersIcon /></MenuButton>
        <SearchBox className="mr-auto ml-[35px] w-[148px]" />
        <MenuButton label="过滤器"><FilterIcon /></MenuButton>
        <button aria-label="新建集合" className="ml-[7px] flex h-[25px] w-[25px] items-center justify-center rounded bg-[#484848] text-[#bbb]"><NewCollectionIcon /></button>
      </div>
      <div className="flex flex-1 flex-col bg-[repeating-linear-gradient(#282828_0px_26px,#2c2c2c_26px_52px)]">
        <div className="flex h-[26px] items-center gap-2 pl-[27px]"><ArchiveIcon />场景集合</div>
        <div className="flex h-[26px] items-center pr-3.5 pl-[27px]">
          <button aria-label="折叠 Collection"><ChevronDown className="size-5" strokeWidth={1.6} /></button>
          <span className="ml-[3px] mr-[5px] flex size-[25px] items-center justify-center rounded bg-[#545454]"><ArchiveIcon /></span>
          <span className="flex-1">Collection</span>
          <span className="relative flex size-4 items-center justify-center">
            <input type="checkbox" aria-label="排除 Collection" defaultChecked className="size-[15px] appearance-none rounded-[2px] bg-[#e0e0e0]" />
            <Check className="pointer-events-none absolute size-3 text-[#282828]" strokeWidth={4} />
          </span>
          <button aria-label="隐藏 Collection" className="ml-[7px]"><EyeIcon /></button>
          <button aria-label="渲染 Collection" className="ml-[6px]"><CameraIcon /></button>
        </div>
        <div className="flex h-[26px] items-center pr-3.5 pl-9">
          <span className="h-3.5 w-px bg-[#777]" />
          <button aria-label="展开 Suzanne" className="ml-4"><ChevronRight className="size-5" strokeWidth={1.6} /></button>
          <span className="ml-[3px] mr-[5px] flex size-[25px] items-center justify-center rounded bg-[#545454]"><TriangleMeshIcon className="text-[#b5853f]" /></span>
          Suzanne
          <WrenchIcon className="ml-7 text-[#4f7fc4]" />
          <MeshIcon className="ml-1.5 text-[#3f9142]" />
          <button aria-label="隐藏 Suzanne" className="ml-auto"><EyeIcon /></button>
          <button aria-label="渲染 Suzanne" className="ml-[6px]"><CameraIcon /></button>
        </div>
      </div>
    </section>
  );
}

/* ---------- properties ---------- */

const NAV = [
  { label: '工具', icon: <ToolIcon />, space: 'mb-2.5', color: 'text-[#aaa]' },
  { label: '渲染', icon: <RenderIcon />, space: '', color: 'text-[#e0e0e0]' },
  { label: '输出', icon: <OutputIcon />, space: '', color: 'text-[#aaa]' },
  { label: '视图层', icon: <LayersIcon />, space: '', color: 'text-[#aaa]' },
  { label: '场景', icon: <SceneIcon />, space: '', color: 'text-[#aaa]' },
  { label: '世界环境', icon: <WorldIcon />, space: 'mb-2.5', color: 'text-[#a8405c]' },
  { label: '集合', icon: <ArchiveLineIcon />, space: 'mb-2.5', color: 'text-[#ccc]' },
  { label: '物体', icon: <ObjectIcon />, space: '', color: 'text-[#a87a35]' },
  { label: '修改器', icon: <WrenchIcon solid />, space: '', color: 'text-[#4772b3]' },
  { label: '粒子', icon: <ParticlesIcon />, space: '', color: 'text-[#4772b3]' },
  { label: '物理', icon: <PhysicsIcon />, space: '', color: 'text-[#4772b3]' },
  { label: '约束', icon: <ConstraintIcon />, space: '', color: 'text-[#4772b3]' },
  { label: '数据', icon: <MeshIcon />, space: '', color: 'text-[#3f9142]' },
  { label: '材质', icon: <MaterialIcon />, space: 'mb-2.5', color: 'text-[#a8405c]' },
  { label: '纹理', icon: <TextureIcon />, space: '', color: 'text-[#a8405c]' },
];

function SelectRow({ label, value }: { label: string; value: string }) {
  return (
    <div className="flex h-[25px] items-center">
      <span className="w-[149px] shrink-0 text-right">{label}</span>
      <Select label={label} value={value} className="ml-3 h-full flex-1" />
    </div>
  );
}

function Threshold({ value }: { value: string }) {
  const id = useId();
  return (
    <div className="flex h-6 items-center">
      <label htmlFor={id} className="mr-[13px] w-[150px] shrink-0 text-right">噪波阈值</label>
      <Checkbox label="启用噪波阈值" checked />
      <input id={id} defaultValue={value} className="ml-2 h-6 min-w-0 flex-1 rounded bg-[#545454] text-center outline-none" />
    </div>
  );
}

function NumberRows({ rows }: { rows: string[][] }) {
  return (
    <div className="flex flex-col gap-px pt-2">
      {rows.map(([label, value], i) => (
        <label key={label} className="flex h-[25px] items-center">
          <span className="mr-[13px] w-[150px] shrink-0 text-right">{label}</span>
          <input
            defaultValue={value}
            className={`h-full min-w-0 flex-1 bg-[#545454] text-center outline-none ${i === 0 ? 'rounded-t' : ''} ${i === rows.length - 1 ? 'rounded-b' : ''}`}
          />
        </label>
      ))}
    </div>
  );
}

function SubHeader({ title, open, list }: { title: string; open?: boolean; list?: boolean }) {
  const Arrow = open ? ChevronDown : ChevronRight;
  return (
    <div className="flex h-8 items-center pr-[37px] pl-[25px]">
      <button className="flex flex-1 items-center gap-1">
        <Arrow className="size-4" aria-hidden="true" />{title}
      </button>
      {list && <button aria-label="预设"><ListIcon /></button>}
    </div>
  );
}

function DenoiseRow({ checked }: { checked?: boolean }) {
  return (
    <div className="mt-2.5 flex h-8 items-center pl-[25px]">
      <button aria-label="展开降噪"><ChevronRight className="mr-1 size-4" /></button>
      <label className="flex items-center gap-1"><Checkbox checked={checked} />降噪</label>
    </div>
  );
}

function Panel({ title, check, list }: { title: string; check?: boolean; list?: boolean }) {
  return (
    <section className="flex h-8 shrink-0 items-center rounded bg-[#3d3d3d] px-2">
      <button aria-label={title} className="pr-1"><ChevronRight className="size-4" /></button>
      {check ? <label className="flex items-center gap-1"><Checkbox />{title}</label> : <span>{title}</span>}
      <span className="flex-1" />
      {list && <button aria-label="预设" className="mr-3"><ListIcon /></button>}
      <GripIcon />
    </section>
  );
}

function Properties() {
  return (
    <section className="mt-[5px] flex min-h-0 flex-1 flex-col overflow-hidden rounded-md bg-[#303030]">
      <div className="flex h-8 shrink-0 items-center pr-2 pl-[9px]">
        <MenuButton label="编辑器类型"><PropsIcon /></MenuButton>
        <SearchBox className="mr-auto ml-[99px] w-[148px]" />
        <button aria-label="选项" className="flex h-[25px] w-[25px] items-center justify-center rounded border border-[#3d3d3d] bg-[#282828]"><Caret /></button>
      </div>
      <div className="flex min-h-0 flex-1">
        <div role="tablist" aria-label="属性" className="flex w-[34px] shrink-0 flex-col bg-[#1c1c1c] pt-[9px]">
          {NAV.map((tab) => (
            <button
              key={tab.label}
              role="tab"
              aria-label={tab.label}
              aria-selected={tab.label === '渲染'}
              className={`ml-px flex h-9 shrink-0 items-center justify-center rounded-l ${tab.space} ${tab.color} ${tab.label === '渲染' ? 'bg-[#303030]' : ''}`}
            >
              {tab.icon}
            </button>
          ))}
        </div>
        <div className="relative flex min-w-0 flex-1 flex-col overflow-hidden pr-2 pl-2.5">
          <div className="flex h-[46px] shrink-0 items-center gap-2.5 pr-0.5 pl-[3px]">
            <SceneIcon />
            <span className="flex-1">Scene</span>
            <button aria-label="固定" className="text-[#999]"><PinIcon /></button>
          </div>
          <div className="flex shrink-0 flex-col gap-[7px] pt-2.5 pb-[13px]">
            <SelectRow label="渲染引擎" value="Cycles" />
            <SelectRow label="功能集" value="支持特性" />
            <SelectRow label="设备" value="GPU 计算" />
            <label className="flex h-[25px] items-center gap-1 pl-[161px]"><Checkbox />开放式着色语言 (OSL)</label>
          </div>

          <section className="mb-0.5 shrink-0 overflow-hidden rounded bg-[#3d3d3d]">
            <div className="flex h-8 items-center px-2">
              <button className="flex flex-1 items-center gap-1"><ChevronDown className="size-4" aria-hidden="true" />采样</button>
              <GripIcon />
            </div>
            <SubHeader title="视图" open list />
            <div className="rounded-b bg-[#353535] pt-[11px]">
              <div className="pr-[11px]">
                <Threshold value="0.1000" />
                <NumberRows rows={[['最大采样', '1024'], ['最小采样', '0']]} />
              </div>
              <DenoiseRow />
            </div>
            <SubHeader title="渲染" open list />
            <div className="rounded-b bg-[#353535] pt-[11px]">
              <div className="pr-[11px]">
                <Threshold value="0.0100" />
                <NumberRows rows={[['最大采样', '1024'], ['最小采样', '0'], ['时间限制', '0 s']]} />
              </div>
              <DenoiseRow checked />
            </div>
            <SubHeader title="灯光" />
            <SubHeader title="高级" />
          </section>

          <div className="flex shrink-0 flex-col gap-0.5">
            <Panel title="光程" list />
            <Panel title="体积" />
            <Panel title="曲线" />
            <Panel title="简化" check />
            <Panel title="运动模糊" check />
            <Panel title="胶片" />
          </div>
          <div className="absolute top-[13px] right-px h-[534px] w-1 rounded-full bg-[#3f3f3f]" />
        </div>
      </div>
    </section>
  );
}

/* ---------- timeline and status ---------- */

function Timeline() {
  return (
    <div className="mt-[5px] ml-0.5 flex h-[31px] shrink-0 items-center rounded-md bg-[#303030] pr-[9px] pl-2">
      <div className="flex flex-1 items-center">
        <MenuButton label="编辑器类型"><ClockIcon /></MenuButton>
        <div className="ml-2 flex h-[25px] overflow-hidden rounded border border-[#3d3d3d] bg-[#282828]">
          <button className="flex w-[59px] items-center justify-between border-r border-[#3d3d3d] pr-[3px] pl-2">回放<Caret /></button>
          <button className="flex w-[59px] items-center justify-between pr-[3px] pl-2.5">插帧<Caret /></button>
        </div>
        <button className="pr-2.5 pl-3">视图</button>
        <button className="px-2.5">标记</button>
      </div>
      <div className="mr-7 flex items-center gap-[9px]">
        <div className="flex h-[25px] overflow-hidden rounded">
          <button aria-label="自动关键帧" className="flex w-6 items-center justify-center bg-[#545454]">
            <span className="size-3.5 rounded-full border border-[#aaa]" />
          </button>
          <button aria-label="关键帧选项" className="flex w-6 items-center justify-center bg-[#2a2a2a] text-[#666]"><Caret /></button>
        </div>
        <div className="flex h-[25px] gap-px overflow-hidden rounded bg-[#3b3b3b]">
          {TRANSPORT.map((t) => (
            <button key={t.label} aria-label={t.label} className="flex w-[25px] items-center justify-center bg-[#545454]">
              <svg viewBox="0 0 20 20" className="size-[18px]" fill="currentColor" aria-hidden="true"><path d={t.d} /></svg>
            </button>
          ))}
        </div>
      </div>
      <div className="flex flex-1 items-center justify-end gap-[7px]">
        <input aria-label="当前帧" defaultValue="1" className="h-[25px] w-24 rounded bg-[#545454] text-center outline-none" />
        <div className="flex h-[25px] gap-px overflow-hidden rounded bg-[#3b3b3b]">
          <button aria-label="使用预览范围" className="flex w-6 items-center justify-center bg-[#545454]"><StopwatchIcon /></button>
          <label className="flex w-28 items-center bg-[#545454] pr-[18px] pl-5">
            起始<input defaultValue="1" className="min-w-0 flex-1 bg-transparent text-right outline-none" />
          </label>
          <label className="flex w-28 items-center bg-[#545454] pr-[18px] pl-5">
            结束<input defaultValue="250" className="min-w-0 flex-1 bg-transparent text-right outline-none" />
          </label>
        </div>
      </div>
    </div>
  );
}

function StatusBar() {
  return (
    <footer className="flex h-[29px] shrink-0 items-center pr-[11px] pl-3 text-[#9a9a9a]">
      <span className="flex w-[281px] items-center gap-1.5"><MouseIcon press="left" />选择</span>
      <span className="flex w-[281px] items-center gap-1.5"><MouseIcon press="middle" />平移视图</span>
      <span className="flex flex-1 items-center gap-1.5"><MouseIcon press="right" />节点</span>
      <span className="mr-3 text-[#808080]">4.2.1</span>
      <button className="flex h-[23px] w-[73px] items-center gap-2 rounded bg-[#545454] pl-1.5 text-[#e0e0e0]"><TranslateIcon />英文</button>
    </footer>
  );
}

export default function App() {
  return (
    <div className="flex h-screen flex-col overflow-hidden bg-[#1c1c1c] font-['Inter','Noto_Sans_CJK_SC',sans-serif] text-sm text-[#dedede] [font-feature-settings:'calt'_0]">
      <TopBar />
      <div className="flex min-h-0 flex-1">
        <main className="flex min-w-0 flex-1 flex-col">
          <EditorHeader />
          <div className="flex min-h-0 flex-1">
            <Canvas />
            <Sidebar />
            <SideTabs />
          </div>
          <Timeline />
        </main>
        <div className="ml-1.5 flex w-[441px] shrink-0 flex-col pt-px pr-0.5">
          <Outliner />
          <Properties />
        </div>
      </div>
      <StatusBar />
    </div>
  );
}
